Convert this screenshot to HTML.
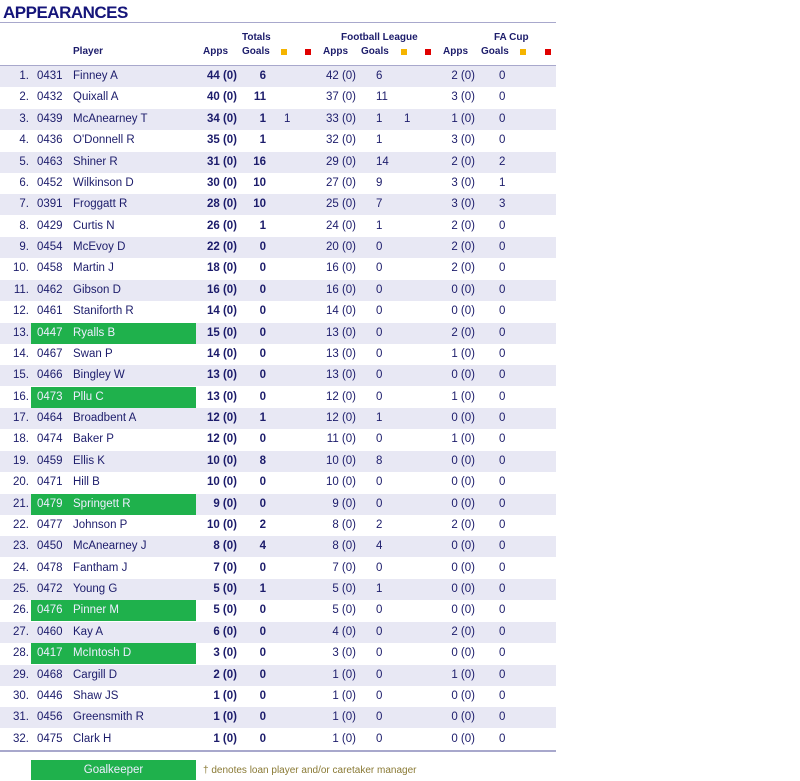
<!DOCTYPE html>
<html><head><meta charset="utf-8"><style>
body{margin:0;width:800px;height:781px;background:#fff;font-family:"Liberation Sans",sans-serif;color:#1c1c6b;position:relative;overflow:hidden}
.t{position:absolute;left:3px;top:3px;font-size:17px;font-weight:bold;color:#15157a;letter-spacing:-0.5px}
.hl{position:absolute;left:0;width:556px;height:1px;background:#a8a8cc}
.h{position:absolute;font-size:10px;font-weight:bold;white-space:nowrap}
.sq{position:absolute;width:6px;height:6px}
.r{position:absolute;left:0;width:556px;height:21px;font-size:11.5px}
.r.s{background:#e8e8f4}
.r span{position:absolute;top:4px;white-space:nowrap}
.g{position:absolute;left:31px;width:165px;top:0;height:21px;background:#1fb14c}
.gk span.i,.gk span.n{color:#eef}
</style></head><body>
<div class="t">APPEARANCES</div>
<div class="hl" style="top:22px"></div>
<div class="h" style="left:242px;top:32px">Totals</div>
<div class="h" style="left:341px;top:32px">Football League</div>
<div class="h" style="left:494px;top:32px">FA Cup</div>
<div class="h" style="left:73px;top:46px">Player</div>
<div class="h" style="left:203px;top:46px">Apps</div>
<div class="h" style="left:242px;top:46px">Goals</div>
<div class="sq" style="left:281px;top:49px;background:#f5b400"></div>
<div class="sq" style="left:305px;top:49px;background:#e00000"></div>
<div class="h" style="left:323px;top:46px">Apps</div>
<div class="h" style="left:361px;top:46px">Goals</div>
<div class="sq" style="left:401px;top:49px;background:#f5b400"></div>
<div class="sq" style="left:425px;top:49px;background:#e00000"></div>
<div class="h" style="left:443px;top:46px">Apps</div>
<div class="h" style="left:481px;top:46px">Goals</div>
<div class="sq" style="left:520px;top:49px;background:#f5b400"></div>
<div class="sq" style="left:545px;top:49px;background:#e00000"></div>
<div class="hl" style="top:65px;height:2px"></div>
<div id="rows"></div>
<div class="hl" style="top:750px;height:2px"></div>
<div style="position:absolute;left:31px;top:760px;width:165px;height:20px;background:#1fb14c;color:#eef;font-size:11.5px;text-align:center;line-height:20px">Goalkeeper</div>
<div style="position:absolute;left:203px;top:765px;font-size:10px;color:#8a7a35">† denotes loan player and/or caretaker manager</div>
<script>
var d=[
["0431","Finney A","44 (0)","6","","42 (0)","6","","2 (0)","0"],
["0432","Quixall A","40 (0)","11","","37 (0)","11","","3 (0)","0"],
["0439","McAnearney T","34 (0)","1","1","33 (0)","1","1","1 (0)","0"],
["0436","O'Donnell R","35 (0)","1","","32 (0)","1","","3 (0)","0"],
["0463","Shiner R","31 (0)","16","","29 (0)","14","","2 (0)","2"],
["0452","Wilkinson D","30 (0)","10","","27 (0)","9","","3 (0)","1"],
["0391","Froggatt R","28 (0)","10","","25 (0)","7","","3 (0)","3"],
["0429","Curtis N","26 (0)","1","","24 (0)","1","","2 (0)","0"],
["0454","McEvoy D","22 (0)","0","","20 (0)","0","","2 (0)","0"],
["0458","Martin J","18 (0)","0","","16 (0)","0","","2 (0)","0"],
["0462","Gibson D","16 (0)","0","","16 (0)","0","","0 (0)","0"],
["0461","Staniforth R","14 (0)","0","","14 (0)","0","","0 (0)","0"],
["0447","Ryalls B","15 (0)","0","","13 (0)","0","","2 (0)","0",1],
["0467","Swan P","14 (0)","0","","13 (0)","0","","1 (0)","0"],
["0466","Bingley W","13 (0)","0","","13 (0)","0","","0 (0)","0"],
["0473","Pllu C","13 (0)","0","","12 (0)","0","","1 (0)","0",1],
["0464","Broadbent A","12 (0)","1","","12 (0)","1","","0 (0)","0"],
["0474","Baker P","12 (0)","0","","11 (0)","0","","1 (0)","0"],
["0459","Ellis K","10 (0)","8","","10 (0)","8","","0 (0)","0"],
["0471","Hill B","10 (0)","0","","10 (0)","0","","0 (0)","0"],
["0479","Springett R","9 (0)","0","","9 (0)","0","","0 (0)","0",1],
["0477","Johnson P","10 (0)","2","","8 (0)","2","","2 (0)","0"],
["0450","McAnearney J","8 (0)","4","","8 (0)","4","","0 (0)","0"],
["0478","Fantham J","7 (0)","0","","7 (0)","0","","0 (0)","0"],
["0472","Young G","5 (0)","1","","5 (0)","1","","0 (0)","0"],
["0476","Pinner M","5 (0)","0","","5 (0)","0","","0 (0)","0",1],
["0460","Kay A","6 (0)","0","","4 (0)","0","","2 (0)","0"],
["0417","McIntosh D","3 (0)","0","","3 (0)","0","","0 (0)","0",1],
["0468","Cargill D","2 (0)","0","","1 (0)","0","","1 (0)","0"],
["0446","Shaw JS","1 (0)","0","","1 (0)","0","","0 (0)","0"],
["0456","Greensmith R","1 (0)","0","","1 (0)","0","","0 (0)","0"],
["0475","Clark H","1 (0)","0","","1 (0)","0","","0 (0)","0"]];
var h="";
d.forEach(function(r,i){
var y=66+i*21.375;
h+='<div class="r'+(i%2==0?' s':'')+(r[10]?' gk':'')+'" style="top:'+y+'px">'+(r[10]?'<div class="g"></div>':'')+
'<span style="right:527px">'+(i+1)+'.</span>'+
'<span class="i" style="left:37px">'+r[0]+'</span>'+
'<span class="n" style="left:73px">'+r[1]+'</span>'+
'<span style="right:319px;font-weight:bold">'+r[2]+'</span>'+
'<span style="right:290px;font-weight:bold">'+r[3]+'</span>'+
'<span style="left:284px">'+r[4]+'</span>'+
'<span style="right:200px">'+r[5]+'</span>'+
'<span style="left:376px">'+r[6]+'</span>'+
'<span style="left:404px">'+r[7]+'</span>'+
'<span style="right:81px">'+r[8]+'</span>'+
'<span style="left:499px">'+r[9]+'</span></div>';
});
document.getElementById("rows").innerHTML=h;
</script>
</body></html>
